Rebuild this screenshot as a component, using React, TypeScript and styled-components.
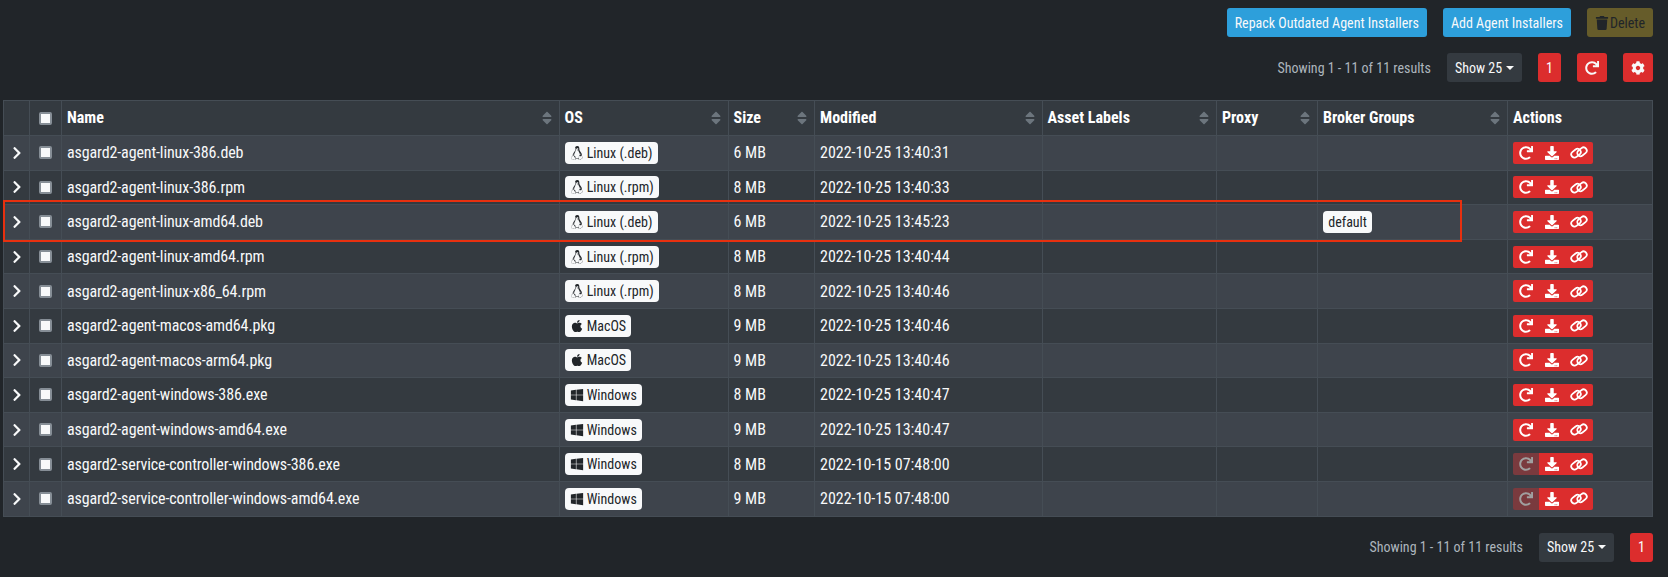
import { createGlobalStyle, styled } from "styled-components";
import { FaApple, FaChevronRight, FaCog, FaDownload, FaLinux, FaRedo, FaSort, FaTrash, FaWindows } from "react-icons/fa";

type OsKind = "linux" | "mac" | "windows";

interface Installer {
	name: string;
	os: OsKind;
	osLabel: string;
	size: string;
	modified: string;
	group?: string;
	noRepack?: boolean;
}

const installers: Installer[] = [
	{ name: "asgard2-agent-linux-386.deb", os: "linux", osLabel: "Linux (.deb)", size: "6 MB", modified: "2022-10-25 13:40:31" },
	{ name: "asgard2-agent-linux-386.rpm", os: "linux", osLabel: "Linux (.rpm)", size: "8 MB", modified: "2022-10-25 13:40:33" },
	{ name: "asgard2-agent-linux-amd64.deb", os: "linux", osLabel: "Linux (.deb)", size: "6 MB", modified: "2022-10-25 13:45:23", group: "default" },
	{ name: "asgard2-agent-linux-amd64.rpm", os: "linux", osLabel: "Linux (.rpm)", size: "8 MB", modified: "2022-10-25 13:40:44" },
	{ name: "asgard2-agent-linux-x86_64.rpm", os: "linux", osLabel: "Linux (.rpm)", size: "8 MB", modified: "2022-10-25 13:40:46" },
	{ name: "asgard2-agent-macos-amd64.pkg", os: "mac", osLabel: "MacOS", size: "9 MB", modified: "2022-10-25 13:40:46" },
	{ name: "asgard2-agent-macos-arm64.pkg", os: "mac", osLabel: "MacOS", size: "9 MB", modified: "2022-10-25 13:40:46" },
	{ name: "asgard2-agent-windows-386.exe", os: "windows", osLabel: "Windows", size: "8 MB", modified: "2022-10-25 13:40:47" },
	{ name: "asgard2-agent-windows-amd64.exe", os: "windows", osLabel: "Windows", size: "9 MB", modified: "2022-10-25 13:40:47" },
	{ name: "asgard2-service-controller-windows-386.exe", os: "windows", osLabel: "Windows", size: "8 MB", modified: "2022-10-15 07:48:00", noRepack: true },
	{ name: "asgard2-service-controller-windows-amd64.exe", os: "windows", osLabel: "Windows", size: "9 MB", modified: "2022-10-15 07:48:00", noRepack: true },
];

const columns = [
	{ label: "Name", width: 497.5 },
	{ label: "OS", width: 169 },
	{ label: "Size", width: 86.5 },
	{ label: "Modified", width: 227.5 },
	{ label: "Asset Labels", width: 174.5 },
	{ label: "Proxy", width: 101 },
	{ label: "Broker Groups", width: 190 },
];

const osIcons = { linux: FaLinux, mac: FaApple, windows: FaWindows };

const GlobalStyle = createGlobalStyle`
	html, body {
		margin: 0;
		background: #212529;
		color: #f8f9fa;
		font-family: "Roboto Condensed", "Liberation Sans Narrow", Roboto, sans-serif;
		font-size: 14px;
	}
`;

const Page = styled.div`
	position: relative;
	height: 577px;
	overflow: hidden;
	padding: 8px 15px 0 3px;
	box-sizing: border-box;
`;

const Toolbar = styled.div<{ $top?: number }>`
	display: flex;
	justify-content: flex-end;
	align-items: center;
	gap: 16px;
	height: 29px;
	margin-top: ${(p) => p.$top ?? 0}px;
`;

const Button = styled.button<{ $tone: "blue" | "red" | "olive" | "dark" }>`
	display: inline-flex;
	align-items: center;
	justify-content: center;
	gap: 1px;
	height: 29px;
	padding: 0 8px;
	border: 0;
	border-radius: 3px;
	font: inherit;
	color: ${(p) => (p.$tone === "olive" ? "#212529" : "#f8f9fa")};
	background: ${(p) =>
		({ blue: "#2d9fdb", red: "#dc2d2d", olive: "#665c2a", dark: "#343a40" })[p.$tone]};

	svg {
		width: auto;
		height: 14px;
	}
`;

const Caret = styled.span`
	width: 0;
	height: 0;
	margin-left: 3px;
	border-top: 4.2px solid currentColor;
	border-left: 4.2px solid transparent;
	border-right: 4.2px solid transparent;
`;

const ResultText = styled.span`
	color: #adb5bd;
`;

const Table = styled.table`
	table-layout: fixed;
	width: 1650px;
	margin-top: 18px;
	border-collapse: collapse;
	background: #343a40;
	border: 1px solid #454d55;
	font-size: 16px;
`;

const HeadCell = styled.th`
	position: relative;
	height: 35px;
	padding: 0 5px 2px;
	box-sizing: border-box;
	text-align: left;
	font-weight: 700;
	color: #fff;
	border: 1px solid #454d55;
`;

const HeadCheckCell = styled(HeadCell)`
	padding: 0;
	text-align: center;
	line-height: 0;
`;

const SortMark = styled(FaSort)`
	position: absolute;
	right: 4px;
	top: 9px;
	font-size: 16px;
	color: #6c757d;
`;

const Row = styled.tr<{ $odd: boolean }>`
	background: ${(p) => (p.$odd ? "#3e444c" : "#343a40")};
`;

const Cell = styled.td`
	height: 34.6px;
	padding: 0 5px;
	box-sizing: border-box;
	color: #f8f9fa;
	border: 1px solid #454d55;
	white-space: nowrap;
`;

const NameCell = styled(Cell)`
	letter-spacing: -0.12px;
`;

const CentreCell = styled(Cell)`
	padding: 0;
	text-align: center;
	line-height: 0;
`;

const Check = styled.span`
	display: inline-block;
	width: 9px;
	height: 9px;
	background: #f8f9fa;
	border: 2px solid #868e96;
	border-radius: 2px;
`;

const Chevron = styled(FaChevronRight)`
	font-size: 14px;
	color: #f8f9fa;
`;

const Badge = styled.span`
	display: inline-flex;
	align-items: center;
	gap: 3px;
	height: 22px;
	padding: 0 5.2px;
	border-radius: 4px;
	background: #f8f9fa;
	color: #212529;
	font-size: 14px;
	vertical-align: middle;

	svg {
		width: auto;
		height: 14px;
	}
`;

const ActionGroup = styled.span`
	display: inline-flex;
	height: 22px;
	border-radius: 2px;
	overflow: hidden;
	vertical-align: middle;
`;

const ActionButton = styled.span<{ $off?: boolean }>`
	display: inline-flex;
	align-items: center;
	justify-content: center;
	padding: 0 6px;
	background: ${(p) => (p.$off ? "#7a3a3e" : "#dc2d2d")};
	color: ${(p) => (p.$off ? "#a0a0a0" : "#fff")};

	svg {
		width: auto;
		height: 14px;
	}
`;

const LinkButton = styled(ActionButton)`
	padding: 0 5px;

	svg {
		height: 13px;
	}
`;

const Highlight = styled.div`
	position: absolute;
	left: 3px;
	top: 200px;
	width: 1455px;
	height: 38px;
	border: 2px solid #e8300f;
	pointer-events: none;
`;

const ChainIcon = () => (
	<svg viewBox="0 0 18 13" fill="none" stroke="currentColor" strokeWidth="1.8">
		<rect x="0.9" y="4" width="10.2" height="6.4" rx="3.2" transform="rotate(-38 6 7.2)" />
		<rect x="6.9" y="2.6" width="10.2" height="6.4" rx="3.2" transform="rotate(-38 12 5.8)" />
	</svg>
);

export default function App() {
	return (
		<>
			<GlobalStyle />
			<Page>
				<Toolbar>
					<Button $tone="blue">Repack Outdated Agent Installers</Button>
					<Button $tone="blue">Add Agent Installers</Button>
					<Button $tone="olive">
						<FaTrash />
						Delete
					</Button>
				</Toolbar>
				<Toolbar $top={16}>
					<ResultText>Showing 1 - 11 of 11 results</ResultText>
					<Button $tone="dark">
						Show 25
						<Caret />
					</Button>
					<Button $tone="red">1</Button>
					<Button $tone="red">
						<FaRedo />
					</Button>
					<Button $tone="red">
						<FaCog />
					</Button>
				</Toolbar>
				<Table>
					<colgroup>
						<col width={26} />
						<col width={32} />
						{columns.map((c) => (
							<col key={c.label} width={c.width} />
						))}
						<col />
					</colgroup>
					<thead>
						<tr>
							<HeadCell />
							<HeadCheckCell>
								<Check />
							</HeadCheckCell>
							{columns.map((c) => (
								<HeadCell key={c.label}>
									{c.label}
									<SortMark />
								</HeadCell>
							))}
							<HeadCell>Actions</HeadCell>
						</tr>
					</thead>
					<tbody>
						{installers.map((item, i) => {
							const OsIcon = osIcons[item.os];
							return (
								<Row key={item.name} $odd={i % 2 === 0}>
									<CentreCell>
										<Chevron />
									</CentreCell>
									<CentreCell>
										<Check />
									</CentreCell>
									<NameCell>{item.name}</NameCell>
									<Cell>
										<Badge>
											<OsIcon />
											{item.osLabel}
										</Badge>
									</Cell>
									<Cell>{item.size}</Cell>
									<Cell>{item.modified}</Cell>
									<Cell />
									<Cell />
									<Cell>{item.group && <Badge>{item.group}</Badge>}</Cell>
									<Cell>
										<ActionGroup>
											<ActionButton $off={item.noRepack}>
												<FaRedo />
											</ActionButton>
											<ActionButton>
												<FaDownload />
											</ActionButton>
											<LinkButton>
												<ChainIcon />
											</LinkButton>
										</ActionGroup>
									</Cell>
								</Row>
							);
						})}
					</tbody>
				</Table>
				<Toolbar $top={16}>
					<ResultText>Showing 1 - 11 of 11 results</ResultText>
					<Button $tone="dark">
						Show 25
						<Caret />
					</Button>
					<Button $tone="red">1</Button>
				</Toolbar>
				<Highlight />
			</Page>
		</>
	);
}
